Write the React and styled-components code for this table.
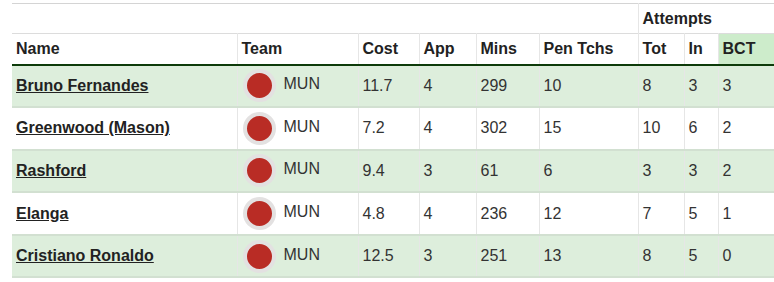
import React from "react";
import styled, { createGlobalStyle } from "styled-components";

const GlobalStyle = createGlobalStyle`
  html, body {
    margin: 0;
    padding: 0;
    background: #ffffff;
    overflow: hidden;
  }
  body {
    font-family: "Liberation Sans", Arial, sans-serif;
  }
`;

const Wrapper = styled.div`
  padding: 3px 0 0 12px;
`;

const Table = styled.table`
  border-collapse: collapse;
  table-layout: fixed;
  width: 790px;
  font-size: 16px;
  color: #333;
`;

const GroupRow = styled.tr`
  height: 30px;
  border-top: 1px solid #d4d4d4;
  border-bottom: 1px solid #dcdcdc;
`;

const HeadRow = styled.tr`
  height: 31px;
  border-bottom: 2px solid #0d3b0a;
`;

const Th = styled.th`
  text-align: left;
  font-weight: bold;
  color: #222;
  padding: 0 4px;
  border-left: ${(p) => (p.$divider ? "1px solid #e6e6e6" : "none")};
  background: ${(p) => (p.$hl ? "#cdeccb" : "transparent")};
  white-space: nowrap;
`;

const Row = styled.tr`
  height: 42.6px;
  background: ${(p) => (p.$green ? "#ddeedc" : "#ffffff")};
  border-bottom: 2px solid #d2e0d1;
`;

const Td = styled.td`
  padding: 0 4px;
  vertical-align: middle;
  border-left: ${(p) => (p.$first ? "none" : "1px solid #e6e6e6")};
  white-space: nowrap;
`;

const PlayerLink = styled.a`
  color: #222;
  font-weight: bold;
  text-decoration: underline;
`;

const TeamCell = styled.div`
  display: flex;
  align-items: center;
  gap: 8px;
  padding-left: 1px;
`;

const Badge = styled.span`
  display: inline-block;
  width: 25px;
  height: 25px;
  border-radius: 50%;
  background: #b92c25;
  border: 4px solid #e3e1e1;
  flex-shrink: 0;
`;

const TeamName = styled.span`
  margin-top: -3px;
`;

const players = [
  ["Bruno Fernandes", "11.7", 4, 299, 10, 8, 3, 3],
  ["Greenwood (Mason)", "7.2", 4, 302, 15, 10, 6, 2],
  ["Rashford", "9.4", 3, 61, 6, 3, 3, 2],
  ["Elanga", "4.8", 4, 236, 12, 7, 5, 1],
  ["Cristiano Ronaldo", "12.5", 3, 251, 13, 8, 5, 0],
];

export default function App() {
  return (
    <Wrapper>
      <GlobalStyle />
      <Table>
        <colgroup>
          <col style={{ width: 225 }} />
          <col style={{ width: 121 }} />
          <col style={{ width: 61 }} />
          <col style={{ width: 57 }} />
          <col style={{ width: 63 }} />
          <col style={{ width: 99 }} />
          <col style={{ width: 46 }} />
          <col style={{ width: 34 }} />
          <col style={{ width: 84 }} />
        </colgroup>
        <thead>
          <GroupRow>
            <Th colSpan={6}></Th>
            <Th colSpan={3} $divider>
              Attempts
            </Th>
          </GroupRow>
          <HeadRow>
            <Th>Name</Th>
            <Th $divider>Team</Th>
            <Th $divider>Cost</Th>
            <Th $divider>App</Th>
            <Th $divider>Mins</Th>
            <Th $divider>Pen Tchs</Th>
            <Th $divider>Tot</Th>
            <Th $divider>In</Th>
            <Th $divider $hl>
              BCT
            </Th>
          </HeadRow>
        </thead>
        <tbody>
          {players.map(([name, cost, app, mins, pen, tot, inn, bct], i) => (
            <Row key={name} $green={i % 2 === 0}>
              <Td $first>
                <PlayerLink href="#">{name}</PlayerLink>
              </Td>
              <Td>
                <TeamCell>
                  <Badge />
                  <TeamName>MUN</TeamName>
                </TeamCell>
              </Td>
              <Td>{cost}</Td>
              <Td>{app}</Td>
              <Td>{mins}</Td>
              <Td>{pen}</Td>
              <Td>{tot}</Td>
              <Td>{inn}</Td>
              <Td>{bct}</Td>
            </Row>
          ))}
        </tbody>
      </Table>
    </Wrapper>
  );
}
